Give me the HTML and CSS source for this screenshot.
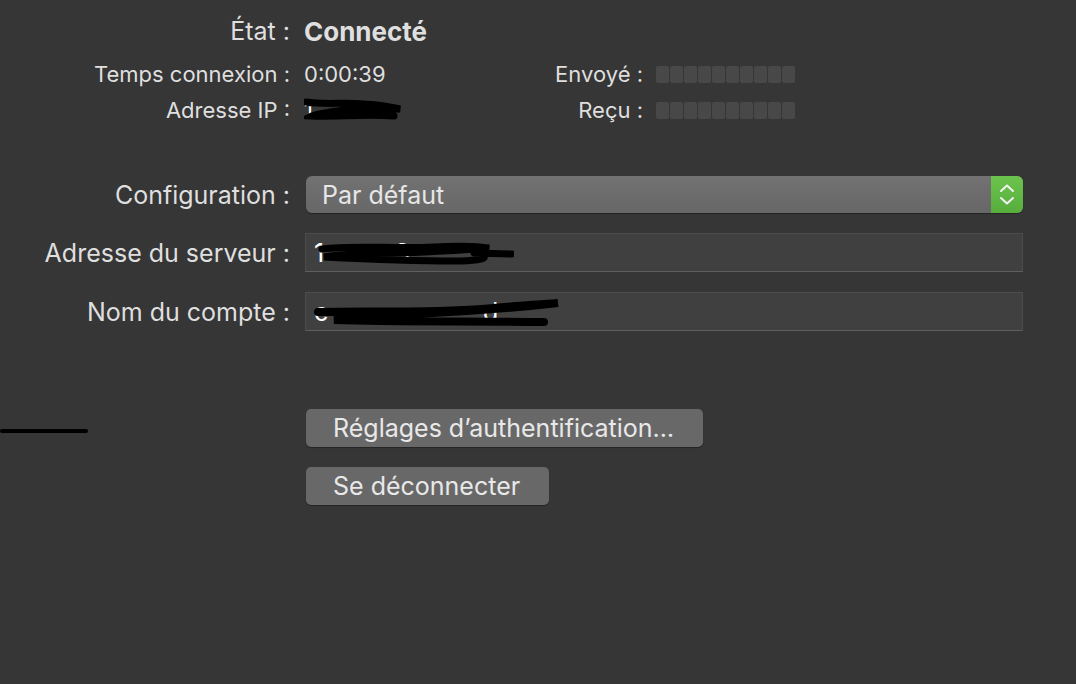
FILE: index.html
```html
<!DOCTYPE html>
<html lang="fr">
<head>
    <meta charset="UTF-8">
    <title>VPN</title>
    <link rel="stylesheet" href="styles.css">
</head>
<body>
    <div class="pane">
        <div class="status">
            <div class="lbl big">État :</div>
            <div class="val state">Connecté</div>
            <div></div>
            <div></div>

            <div class="lbl">Temps connexion :</div>
            <div class="val">0:00:39</div>
            <div class="lbl">Envoyé :</div>
            <div class="val meter-cell">
                <div class="meter"><i></i><i></i><i></i><i></i><i></i><i></i><i></i><i></i><i></i><i></i></div>
            </div>

            <div class="lbl">Adresse IP :</div>
            <div class="val">
                <span class="redacted ip">
                    <span class="under">1</span>
                    <svg width="100" height="26" viewBox="0 0 100 26">
                        <path d="M2 6 C20 9 40 6 60 8 C75 9 88 11 96 13 C80 14 60 12 40 14 C25 16 12 18 8 20 C30 21 60 18 90 20" stroke="#000" stroke-width="7" fill="none" stroke-linecap="round"/>
                    </svg>
                </span>
            </div>
            <div class="lbl">Reçu :</div>
            <div class="val meter-cell">
                <div class="meter"><i></i><i></i><i></i><i></i><i></i><i></i><i></i><i></i><i></i><i></i></div>
            </div>
        </div>

        <div class="form">
            <div class="lbl">Configuration :</div>
            <div class="popup">
                <span class="popup-text">Par défaut</span>
                <span class="stepper">
                    <svg width="18" height="26" viewBox="0 0 18 26">
                        <path d="M3 9 L9 3.5 L15 9 M3 16 L9 21.5 L15 16" stroke="#f2f2f2" stroke-width="2" fill="none" stroke-linecap="round" stroke-linejoin="round"/>
                    </svg>
                </span>
            </div>

            <div class="lbl">Adresse du serveur :</div>
            <div class="field">
                <span class="redacted">
                    <span class="under">1&nbsp;&nbsp;&nbsp;&nbsp;&nbsp;&nbsp;&nbsp;&nbsp;&nbsp;&nbsp;3</span>
                    <svg width="200" height="36" viewBox="0 0 200 36">
                        <path d="M8 14 C40 10 80 14 120 12 C150 10 170 12 175 13 C140 16 90 18 60 18 C40 19 20 20 10 22 C50 24 100 26 140 26 C160 26 172 24 170 22 M160 18 L198 19" stroke="#000" stroke-width="7" fill="none" stroke-linecap="round"/>
                    </svg>
                </span>
            </div>

            <div class="lbl">Nom du compte :</div>
            <div class="field">
                <span class="redacted">
                    <span class="under">c&nbsp;&nbsp;&nbsp;&nbsp;&nbsp;&nbsp;&nbsp;&nbsp;&nbsp;&nbsp;&nbsp;&nbsp;&nbsp;&nbsp;&nbsp;&nbsp;&nbsp;&nbsp;&nbsp;&nbsp;&nbsp;&nbsp;d</span>
                    <svg width="250" height="36" viewBox="0 0 250 36">
                        <path d="M4 18 C60 16 120 20 180 14 C210 11 235 10 244 9 C200 14 150 18 100 20 C70 22 40 24 20 26 C80 28 150 27 230 28" stroke="#000" stroke-width="8" fill="none" stroke-linecap="round"/>
                    </svg>
                </span>
            </div>
        </div>

        <div class="actions">
            <div class="stub"><span class="rule"></span></div>
            <div class="buttons">
                <button class="btn">Réglages d’authentification…</button>
                <button class="btn">Se déconnecter</button>
            </div>
        </div>
    </div>
</body>
</html>
```

FILE: styles.css
```css
:root {
    --bg: #363636;
    --text: #dfdfdf;
    --field: #404040;
    --popup: #6a6a6a;
    --green: #62b947;
}
body {
    margin: 0;
    background: var(--bg);
    color: var(--text);
    font-family: Inter, "Noto Sans", sans-serif;
    height: 684px;
    overflow: hidden;
}
.pane {
    padding-top: 12px;
}
.status {
    display: grid;
    grid-template-columns: 290px 214px 139px 1fr;
    grid-template-rows: 38px 48px 24px;
    align-items: center;
    font-size: 22px;
}
.lbl {
    text-align: right;
    white-space: nowrap;
}
.lbl.big {
    font-size: 25px;
}
.val {
    padding-left: 14px;
}
.state {
    font-weight: 700;
    font-size: 26px;
}
.meter-cell {
    padding-left: 13px;
}
.meter {
    display: flex;
    gap: 1px;
}
.meter i {
    width: 13px;
    height: 17px;
    background: #484848;
    border-radius: 2px;
}
.redacted {
    position: relative;
    display: inline-block;
}
.redacted svg {
    position: absolute;
    left: 0;
    top: 50%;
    transform: translateY(-50%);
}
.redacted .under {
    color: #fff;
}
.redacted.ip {
    width: 98px;
    height: 24px;
}

.form {
    margin-top: 54px;
    display: grid;
    grid-template-columns: 290px 717px;
    column-gap: 16px;
    row-gap: 20px;
    align-items: center;
    font-size: 25px;
}
.popup {
    display: flex;
    align-items: center;
    height: 37px;
    background: linear-gradient(#727272, #676767);
    border-radius: 6px;
    box-shadow: 0 1px 1px rgba(0,0,0,0.35);
    overflow: hidden;
}
.popup-text {
    flex: 1;
    padding-left: 16px;
    color: #e6e6e6;
}
.stepper {
    width: 32px;
    height: 100%;
    background: linear-gradient(#6cc44e, #57ad3c);
    display: flex;
    align-items: center;
    justify-content: center;
}
.field {
    box-sizing: border-box;
    height: 39px;
    margin-left: -1px;
    background: var(--field);
    border: 1px solid #4c4c4c;
    border-bottom-color: #5e5e5e;
    display: flex;
    align-items: center;
    padding-left: 8px;
    color: #fff;
}

.actions {
    margin-top: 78px;
    display: grid;
    grid-template-columns: 306px 1fr;
}
.stub {
    padding-top: 20px;
}
.rule {
    display: block;
    width: 88px;
    height: 4px;
    background: #000;
    border-radius: 2px;
}
.buttons {
    display: flex;
    flex-direction: column;
    align-items: flex-start;
    gap: 20px;
}
.btn {
    font-family: Inter, "Noto Sans", sans-serif;
    font-size: 25px;
    color: #e8e8e8;
    background: #686868;
    border: none;
    border-radius: 5px;
    box-shadow: 0 1px 1px rgba(0,0,0,0.35);
    height: 38px;
    padding: 0 29px 0 27px;
}
```
